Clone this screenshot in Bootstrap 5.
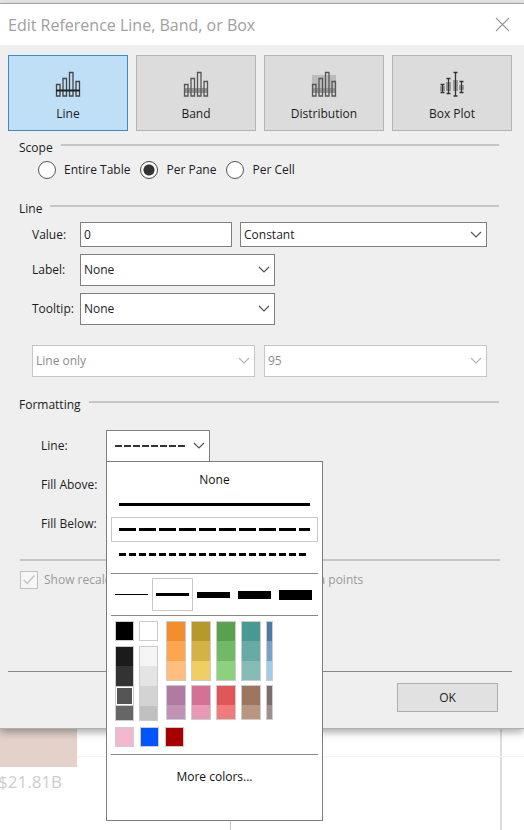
<!DOCTYPE html>
<html lang="en">
<head>
<meta charset="utf-8">
<meta name="viewport" content="width=device-width, initial-scale=1">
<title>Edit Reference Line, Band, or Box</title>
<link href="https://cdn.jsdelivr.net/npm/bootstrap@5.3.0/dist/css/bootstrap.min.css" rel="stylesheet">
<style>
body{font-family:"Open Sans","Noto Sans",sans-serif;font-size:12px;line-height:16px;color:#1c1c24;background:#fff}
button,input,select{font:inherit;color:inherit}
.app-strip{height:3px;background:#e9e9e9}
.dlg{background:#efefef;border-top:1px solid #a3a3a3;border-bottom:1px solid #b0b0b0;box-shadow:0 3px 8px rgba(0,0,0,.35);padding-bottom:16px}
.dlg-title{height:41px;padding:0 14px 0 8px;background:#fff}
.dlg-title h1{font-size:16px;line-height:22px;color:#a0a0a0;font-weight:400}
.x-btn{border:0;background:none;padding:0;line-height:0}
.kinds{display:grid;grid-template-columns:repeat(4,1fr);gap:8px;padding:10px 12px 0 8px}
.kind{height:76px;background:#dcdcdc;border:1px solid #b4b4b4;padding:15px 0 0;color:#1c1c24}
.kind.active{background:#bfdff7;border-color:#3a8ccb}
.kind svg{width:26px;height:26px;margin-bottom:9px}
.group-title{display:flex;gap:8px;padding:0 25px 0 19px;font-size:12px;line-height:16px;font-weight:400;margin:0}
.group-title::after{content:"";flex:1;height:2px;margin-top:4px;background:#c6c6c6}
.scope-head{margin-top:9px}
.line-head{margin-top:22px}
.scope-row{padding:5px 0 0 38px;gap:10px}
.form-check-input.dot{width:18px;height:18px;margin:0;border:1px solid #555;background:#fff}
.form-check-input.dot:checked{border-color:#444;background:radial-gradient(circle,#333 5px,#fff 6px)}
.form-check-input.tick{width:18px;height:18px;margin:0;border-radius:0;border:1px solid #c0c0c0;background:#f6f6f6;opacity:1}
.form-check-input.tick:checked{background:#f6f6f6 url("data:image/svg+xml,%3Csvg xmlns='http://www.w3.org/2000/svg' viewBox='0 0 18 18'%3E%3Cpath d='M3 9l4 4 8-9' fill='none' stroke='%23c4c4c4' stroke-width='1.6'/%3E%3C/svg%3E") center/16px no-repeat}
.field-grid{display:grid;grid-template-columns:48px 195px 1fr;padding:5px 37px 0 32px;align-items:center;row-gap:7px}
.box{height:32px;border:1px solid #7f7f7f;border-radius:0;background-color:#fff;padding:0 24px 0 3px;font-size:12px;line-height:16px;color:#1c1c24}
.box.low{height:25px}
select.box{background-image:url("data:image/svg+xml,%3Csvg xmlns='http://www.w3.org/2000/svg' viewBox='0 0 12 8'%3E%3Cpath d='M1 1l5 5 5-5' fill='none' stroke='%23555' stroke-width='1.2'/%3E%3C/svg%3E");background-size:12px 8px;background-position:right 4px center}
select.box:disabled{background-color:#fff;color:#8c8c8c;border-color:#c6c6c6;background-image:url("data:image/svg+xml,%3Csvg xmlns='http://www.w3.org/2000/svg' viewBox='0 0 12 8'%3E%3Cpath d='M1 1l5 5 5-5' fill='none' stroke='%23b4b4b4' stroke-width='1.2'/%3E%3C/svg%3E")}
.value-pair{grid-column:2/4;display:grid;grid-template-columns:152px 1fr;gap:8px}
.stat-pair{display:grid;grid-template-columns:1fr 1fr;gap:9px;padding:20px 37px 0 32px}
.fmt-grid{display:grid;grid-template-columns:65px 104px;padding:17px 0 0 41px;grid-auto-rows:39px}
.fmt-grid>label,.fmt-grid>span{padding-top:8px;white-space:nowrap}
.line-btn{width:104px;height:32px;border:1px solid #7f7f7f;background:#fff;padding:0 4px 0 8px}
.rule{height:2px;background:#c6c6c6}
.recalc-rule{margin:12px 24px 0 20px}
.recalc{padding:10px 0 0 20px;gap:6px;color:#9a9a9a}
.recalc label{opacity:1!important;white-space:nowrap}
.foot-rule{margin:82px 12px 0 8px}
.foot{padding:11px 26px 0 0}
.ok-btn{width:101px;height:29px;border:1px solid #adadad;background:#e1e1e1;border-radius:0;color:#1c1c24}
.picker{position:absolute;top:31px;left:0;z-index:5;width:217px;height:360px;background:#fff;border:1px solid #7d7d7d;padding:0 4px}
.picker button{border:1px solid transparent;background:none;padding:0}
.picker button.chosen{border-color:#c8c8c8}
.picker button.word{display:block;width:100%;font-weight:500;font-size:12px;line-height:16px;color:#111;padding:9px 0 3px}
.picker button.style-btn{height:25px;display:flex;align-items:center;padding:0 7px}
.divider{height:1px;background:#888}
.styles-end{margin-top:6px}
.weights{height:41px;display:grid;grid-template-columns:repeat(5,41px);padding-top:4px}
.weights button{height:33px;display:flex;align-items:center;justify-content:center}
.bar-w{width:33px;background:#000}
.swatches{padding:5px 0 0 4px;gap:5px}
.strip{display:flex;flex-direction:column;width:19px}
.strip button{height:20px}
.strip button.end{height:15px}
.picker .strip button{background:var(--c);border-color:#ccc;border-width:0 1px}
.picker .strip button:first-child{border-top-width:1px}
.picker .strip button:last-child{border-bottom-width:1px}
.picker .strip button.picked{border:1px solid #ccc;box-shadow:inset 0 0 0 1px #fff}
.low-strip{margin-top:4px}
.grey-strip{margin-top:5px}
.hue .strip{width:20px}
.hue-first{margin-left:3px}
.hue .narrow{width:7px}
.custom{padding:6px 0 0 4px;gap:6px}
.custom-end{margin-top:7px}
.backdrop-chart{background:linear-gradient(#f2f2f2,#f2f2f2) 0 27px/100% 1px no-repeat,linear-gradient(#dcdcdc,#dcdcdc) calc(100% - 22px) 0/2px 100% no-repeat,linear-gradient(#c4c4c4,#c4c4c4) 230px 0/1px 100% no-repeat}
.chart-bar{width:77px;height:38px;background:#e3d1ca}
.chart-val{font-size:17px;line-height:22px;color:#cdcdcd;margin:4px 0 0 -2px}
</style>
<script src="https://cdn.jsdelivr.net/npm/bootstrap@5.3.0/dist/js/bootstrap.bundle.min.js"></script>
</head>
<body class="d-flex flex-column min-vh-100 overflow-hidden">
<div class="app-strip"></div>
<main class="dlg position-relative">
  <header class="dlg-title d-flex align-items-center justify-content-between">
    <h1 class="m-0">Edit Reference Line, Band, or Box</h1>
    <button class="x-btn" type="button" aria-label="Close"><svg width="15" height="15" viewBox="0 0 15 15"><path d="M1 1l13 13M14 1L1 14" fill="none" stroke="#999" stroke-width="1.1"/></svg></button>
  </header>

  <div class="kinds">
    <button type="button" class="kind active d-flex flex-column align-items-center">
      <svg viewBox="0 0 26 26" fill="none" stroke="#444" stroke-width="1.3"><path d="M1.500 13.500h3.500v11.500h-3.500zM8 7.500h3.500v17.500h-3.500zM14.500 1.500h3.500v23.500h-3.500zM21 10.500h3.500v14.500h-3.500z"/><path d="M1 19.500h24" stroke="#222" stroke-width="2"/></svg>
      Line</button>
    <button type="button" class="kind d-flex flex-column align-items-center">
      <svg viewBox="0 0 26 26" fill="none" stroke="#555" stroke-width="1.3"><path d="M1 17h24v5H1z" fill="#999" stroke="none"/><path d="M1.500 13.500h3.500v11.500h-3.500zM8 7.500h3.500v17.500h-3.500zM14.500 1.500h3.500v23.500h-3.500zM21 10.500h3.500v14.500h-3.500z"/></svg>
      Band</button>
    <button type="button" class="kind d-flex flex-column align-items-center">
      <svg viewBox="0 0 26 26" fill="none" stroke="#555" stroke-width="1.3"><path d="M1 4h24v13H1z" fill="#bbb" stroke="none"/><path d="M1 17h24v5H1z" fill="#999" stroke="none"/><path d="M1.500 13.500h3.500v11.500h-3.500zM8 7.500h3.500v17.500h-3.500zM14.500 1.500h3.500v23.500h-3.500zM21 10.500h3.500v14.500h-3.500z"/></svg>
      Distribution</button>
    <button type="button" class="kind d-flex flex-column align-items-center">
      <svg viewBox="0 0 26 26" fill="none"><path d="M1 15h5v5H1zM7 11h5v9H7zM14 9h5v11h-5zM20 14h5v5h-5z" fill="#999"/><path d="M3.500 13v8M9.500 7v15M16.500 1v24M22.500 10v11M1.500 13.500h4M1.500 21.500h4M7.500 7.500h4M7.500 22.500h4M14.500 1.500h4M14.500 25h4M20.500 10.500h4M20.500 21.500h4" stroke="#333" stroke-width="1.300"/></svg>
      Box Plot</button>
  </div>

  <h2 class="group-title scope-head">Scope</h2>
  <div class="scope-row d-flex">
    <div class="d-flex align-items-center gap-2"><input class="form-check-input dot" type="radio" name="scope" id="s1"><label for="s1">Entire Table</label></div>
    <div class="d-flex align-items-center gap-2"><input class="form-check-input dot" type="radio" name="scope" id="s2" checked><label for="s2">Per Pane</label></div>
    <div class="d-flex align-items-center gap-2"><input class="form-check-input dot" type="radio" name="scope" id="s3"><label for="s3">Per Cell</label></div>
  </div>

  <h2 class="group-title line-head">Line</h2>
  <div class="field-grid">
    <label for="val">Value:</label>
    <div class="value-pair">
      <input id="val" class="form-control box low" type="text" value="0">
      <select class="form-select box low" aria-label="Value type"><option>Constant</option></select>
    </div>
    <label for="lab">Label:</label>
    <select id="lab" class="form-select box"><option>None</option></select><span></span>
    <label for="tip">Tooltip:</label>
    <select id="tip" class="form-select box"><option>None</option></select><span></span>
  </div>
  <div class="stat-pair">
    <select class="form-select box" aria-label="Interval" disabled><option>Line only</option></select>
    <select class="form-select box" aria-label="Confidence" disabled><option>95</option></select>
  </div>

  <h2 class="group-title pt-3 mt-1">Formatting</h2>
  <div class="fmt-grid">
    <label for="lineStyle">Line:</label>
    <div class="position-relative">
      <button id="lineStyle" type="button" class="line-btn d-flex align-items-center justify-content-between" aria-expanded="true">
        <svg width="70" height="2"><path d="M0 1h70" stroke="#333" stroke-width="2" stroke-dasharray="7 2"/></svg>
        <svg width="12" height="8" viewBox="0 0 12 8"><path d="M1 1l5 5 5-5" fill="none" stroke="#555" stroke-width="1.200"/></svg>
      </button>
      <div class="picker">
        <button type="button" class="word">None</button>
        <button type="button" class="style-btn w-100" aria-label="Solid"><svg width="191" height="3"><path d="M0 1.500h191" stroke="#000" stroke-width="3"/></svg></button>
        <button type="button" class="style-btn chosen w-100" aria-label="Dashed"><svg width="191" height="3"><path d="M0 1.500h191" stroke="#000" stroke-width="3" stroke-dasharray="17 3"/></svg></button>
        <button type="button" class="style-btn w-100" aria-label="Dotted"><svg width="191" height="3"><path d="M0 1.500h187" stroke="#000" stroke-width="3" stroke-dasharray="7 3"/></svg></button>
        <div class="divider styles-end"></div>
        <div class="weights">
          <button type="button" aria-label="Weight 1"><svg class="bar-w" height="1"></svg></button>
          <button type="button" class="chosen" aria-label="Weight 2"><svg class="bar-w" height="3"></svg></button>
          <button type="button" aria-label="Weight 3"><svg class="bar-w" height="6"></svg></button>
          <button type="button" aria-label="Weight 4"><svg class="bar-w" height="8"></svg></button>
          <button type="button" aria-label="Weight 5"><svg class="bar-w" height="10"></svg></button>
        </div>
        <div class="divider"></div>
        <div class="swatches d-flex">
          <div>
            <div class="strip"><button type="button" style="--c:#000" aria-label="Black"></button></div>
            <div class="strip grey-strip"><button type="button" style="--c:#1b1b1b" aria-label="Grey 1"></button><button type="button" style="--c:#333" aria-label="Grey 2"></button><button type="button" class="picked" style="--c:#555" aria-label="Grey 3"></button><button type="button" class="end" style="--c:#666" aria-label="Grey 4"></button></div>
          </div>
          <div>
            <div class="strip"><button type="button" style="--c:#fff" aria-label="White"></button></div>
            <div class="strip grey-strip"><button type="button" style="--c:#f5f5f5" aria-label="Grey 5"></button><button type="button" style="--c:#e4e4e4" aria-label="Grey 6"></button><button type="button" style="--c:#d3d3d3" aria-label="Grey 7"></button><button type="button" class="end" style="--c:#c0c0c0" aria-label="Grey 8"></button></div>
          </div>
          <div class="hue hue-first">
            <div class="strip"><button type="button" style="--c:#f28e2b" aria-label="Orange 1"></button><button type="button" style="--c:#fca652" aria-label="Orange 2"></button><button type="button" style="--c:#ffbe7d" aria-label="Orange 3"></button></div>
            <div class="strip low-strip"><button type="button" style="--c:#b07aa1" aria-label="Purple 1"></button><button type="button" class="end" style="--c:#c192b8" aria-label="Purple 2"></button></div>
          </div>
          <div class="hue">
            <div class="strip"><button type="button" style="--c:#b6992d" aria-label="Yellow 1"></button><button type="button" style="--c:#d3b348" aria-label="Yellow 2"></button><button type="button" style="--c:#f1ce63" aria-label="Yellow 3"></button></div>
            <div class="strip low-strip"><button type="button" style="--c:#d37295" aria-label="Pink 1"></button><button type="button" class="end" style="--c:#e899b5" aria-label="Pink 2"></button></div>
          </div>
          <div class="hue">
            <div class="strip"><button type="button" style="--c:#59a14f" aria-label="Green 1"></button><button type="button" style="--c:#70b966" aria-label="Green 2"></button><button type="button" style="--c:#8cd17d" aria-label="Green 3"></button></div>
            <div class="strip low-strip"><button type="button" style="--c:#e15759" aria-label="Red 1"></button><button type="button" class="end" style="--c:#f07b7d" aria-label="Red 2"></button></div>
          </div>
          <div class="hue">
            <div class="strip"><button type="button" style="--c:#499894" aria-label="Teal 1"></button><button type="button" style="--c:#68aaa6" aria-label="Teal 2"></button><button type="button" style="--c:#86bcb6" aria-label="Teal 3"></button></div>
            <div class="strip low-strip"><button type="button" style="--c:#9d7660" aria-label="Brown 1"></button><button type="button" class="end" style="--c:#ba9580" aria-label="Brown 2"></button></div>
          </div>
          <div class="hue">
            <div class="strip narrow"><button type="button" style="--c:#4e79a7" aria-label="Blue 1"></button><button type="button" style="--c:#77a1c8" aria-label="Blue 2"></button><button type="button" style="--c:#a0cbe8" aria-label="Blue 3"></button></div>
            <div class="strip narrow low-strip"><button type="button" style="--c:#79706e" aria-label="Taupe 1"></button><button type="button" class="end" style="--c:#9a918e" aria-label="Taupe 2"></button></div>
          </div>
        </div>
        <div class="custom d-flex">
          <div class="strip"><button type="button" style="--c:#f2b8cf" aria-label="Custom 1"></button></div>
          <div class="strip"><button type="button" style="--c:#0055ff" aria-label="Custom 2"></button></div>
          <div class="strip"><button type="button" style="--c:#a60000" aria-label="Custom 3"></button></div>
        </div>
        <div class="divider custom-end"></div>
        <button type="button" class="word mt-1">More colors...</button>
      </div>
    </div>
    <span>Fill Above:</span><span></span>
    <span>Fill Below:</span><span></span>
  </div>

  <div class="rule recalc-rule"></div>
  <div class="recalc d-flex align-items-center">
    <input class="form-check-input tick" type="checkbox" id="rc" checked disabled>
    <label for="rc">Show recalculated lines for all the highlighted data points</label>
  </div>
  <div class="divider foot-rule"></div>
  <div class="foot d-flex justify-content-end"><button type="button" class="ok-btn">OK</button></div>
</main>
<section class="backdrop-chart flex-grow-1">
  <div class="chart-bar"></div>
  <div class="chart-val">$21.81B</div>
</section>
</body>
</html>
